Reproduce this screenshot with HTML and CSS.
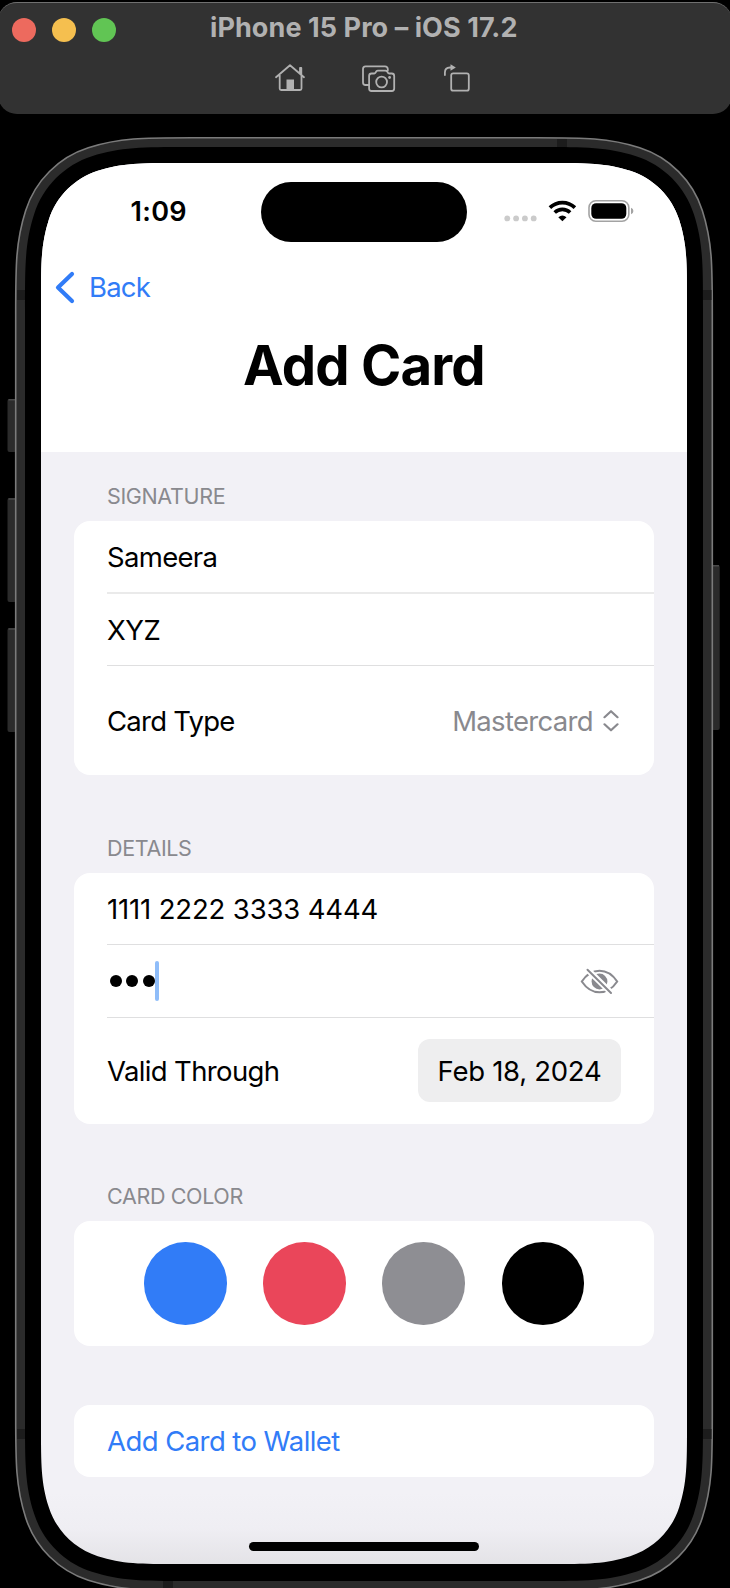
FILE: index.html
```html
<!DOCTYPE html>
<html lang="en">
<head>
<meta charset="utf-8">
<title>Simulator</title>
<link rel="stylesheet" href="styles.css">
</head>
<body>
<header class="window-bar">
  <div class="title-row">
    <div class="lights"><i class="light red"></i><i class="light yellow"></i><i class="light green"></i></div>
    <div class="window-title"><span>iPhone 15 Pro – iOS 17.2</span></div>
  </div>
  <div class="tools">
    <svg class="tool" width="34" height="30" viewBox="273 63 34 30"><path d="M276 77.200L290 65.300L304 77.200M300 73.500V68H301.300V75M279.700 75V88.500Q279.700 90 281.200 90H300Q301.500 90 301.500 88.500V75"/><path class="solid" d="M286.500 79.500h7.500v10.500h-7.500z"/></svg>
    <svg class="tool" width="36" height="30" viewBox="361 63 36 30"><path d="M368 85H365.500Q363 85 363 82.500V69Q363 66.300 365.500 66.300H385Q387.600 66.300 387.800 69V70.500M371.500 73.500H374.200Q375 73.500 375.600 72.500L376.400 71.300Q376.900 70.600 378 70.600H385.300Q386.400 70.600 387 71.300L387.800 72.500Q388.300 73.500 389.200 73.500H391.800Q394.200 73.500 394.200 76V88.500Q394.200 91 391.800 91H371.500Q369.100 91 369.100 88.500V76Q369.100 73.500 371.500 73.500Z"/><circle cx="381.600" cy="82" r="5.400"/><circle class="solid" cx="389.600" cy="77.500" r="1.400"/></svg>
    <svg class="tool" width="30" height="30" viewBox="442 62 30 30"><rect x="451.200" y="72.300" width="17.600" height="17.400" rx="2"/><path d="M444.900 74V71.500Q445 66.600 450 66.500H451.500"/><path class="solid" d="M450.500 63.200L455.800 66.500L450.500 69.800Z"/></svg>
  </div>
</header>

<main class="phone">
  <svg class="frame" width="730" height="1457" viewBox="0 137 730 1457">
    <g class="buttons">
      <rect x="7.500" y="399" width="9" height="53" rx="2"/><rect x="7.500" y="498" width="9" height="104" rx="2"/><rect x="7.500" y="628" width="9" height="104" rx="2"/><rect x="711" y="565" width="8.700" height="165" rx="2"/>
    </g>
    <path class="button-edge" d="M8.500 399.700H15M8.500 498.900H15M8.500 628.900H15M713 565.700H719"/>
    <path class="shell" d="M191.500 137.800H536.500c48 0 72.300 0 103.200 10c29.600 9.500 53.200 33 62.600 62.600c10 30.900 10 55.200 10 103.200V1414.500c0 48 0 72.300 -10 103.200c-9.500 29.600 -33 53.200 -62.600 62.600c-30.900 10 -55.200 10 -103.200 10H191.500c-48 0 -72.300 0 -103.200 -10c-29.600 -9.500 -53.200 -33 -62.600 -62.600c-10 -30.900 -10 -55.200 -10 -103.200V313.600c0 -48 0 -72.300 10 -103.200c9.500 -29.600 33 -53.200 62.600 -62.600c30.900 -10 55.200 -10 103.200 -10Z"/>
    <path class="antenna" d="M557 139h10v9h-10zM163 1581h10v8h-10zM17 290h9v10h-9zM703 290h8.500v10h-8.500zM17 1429h9v10h-9zM703 1429h8.500v10h-8.500z"/>
    <path class="bezel" d="M187 147H541c44.300 0 66.700 0 95.100 9.200c27.300 8.700 49 30.400 57.700 57.700c9.200 28.500 9.200 50.900 9.200 95.100V1419c0 44.300 0 66.700 -9.200 95.100c-8.700 27.300 -30.400 49 -57.700 57.700c-28.500 9.200 -50.900 9.200 -95.100 9.200H187c-44.300 0 -66.700 0 -95.100 -9.200c-27.300 -8.700 -49 -30.400 -57.700 -57.700c-9.200 -28.500 -9.200 -50.900 -9.200 -95.100V309c0 -44.300 0 -66.700 9.200 -95.100c8.700 -27.300 30.400 -49 57.700 -57.700c28.500 -9.200 50.900 -9.200 95.100 -9.200Z"/>
  </svg>

  <div class="screen">
    <div class="top">
      <div class="status">
        <div class="time"><span>1:09</span></div>
        <div class="island"></div>
        <svg class="status-icons" width="132" height="26" viewBox="503 197 132 26">
          <g fill="#cbcbcb"><circle cx="507.300" cy="218.400" r="2.900"/><circle cx="516.100" cy="218.400" r="2.900"/><circle cx="524.900" cy="218.400" r="2.900"/><circle cx="533.700" cy="218.400" r="2.900"/></g>
          <g fill="none" stroke="#000" stroke-width="3.700"><path d="M549.900 207.600A18 18 0 0 1 574.900 207.600"/><path d="M554.700 212.500A11.300 11.300 0 0 1 570.100 212.500"/></g>
          <path d="M558.300 217.200Q562.400 213.600 566.500 217.200L562.400 221.300Z"/>
          <rect x="589" y="200.800" width="39.800" height="20.500" rx="6.800" fill="none" stroke="#a3a3a3" stroke-width="1.600"/>
          <rect x="591.300" y="203.200" width="35" height="15.600" rx="4.800"/>
          <path d="M631 207.800Q633.400 208.700 633.400 211T631 214.200Z" fill="#a3a3a3"/>
        </svg>
      </div>
      <a class="back"><svg width="20" height="34" viewBox="0 0 20 34"><path d="M17 3L3 16.500L17 30"/></svg><span>Back</span></a>
      <h1 class="heading"><span>Add Card</span></h1>
    </div>

    <section class="group">
      <h2 class="label"><span>SIGNATURE</span></h2>
      <div class="card">
        <div class="row thick"><span class="t-name">Sameera</span></div>
        <div class="row"><span class="t-xyz">XYZ</span></div>
        <div class="row tall"><span class="t-type">Card Type</span>
          <div class="picker"><span>Mastercard</span><svg width="16" height="24" viewBox="0 0 16 24"><path d="M1.500 8.200L8 2.200L14.500 8.200M1.500 15.300L8 21.300L14.500 15.300"/></svg></div>
        </div>
      </div>
    </section>

    <section class="group">
      <h2 class="label details"><span>DETAILS</span></h2>
      <div class="card">
        <div class="row"><span class="t-number">1111 2222 3333 4444</span></div>
        <div class="row code">
          <div class="secret"><i class="dot"></i><i class="dot"></i><i class="dot"></i><i class="caret"></i></div>
          <svg class="eye" width="40" height="28" viewBox="580 967 40 28"><circle class="pupil" cx="599.500" cy="981.500" r="7.900"/><path d="M581.800 981.500C586.800 974 592.800 970.700 599.500 970.700S612.200 974 617.200 981.500C612.200 989 606.200 992.300 599.500 992.300S586.800 989 581.800 981.500Z"/><path class="gap" d="M587 969L611.800 993.400"/><path d="M587.500 969.800L611 993"/></svg>
        </div>
        <div class="row medium"><span class="t-valid">Valid Through</span><div class="date"><span>Feb 18, 2024</span></div></div>
      </div>
    </section>

    <section class="group">
      <h2 class="label color"><span>CARD COLOR</span></h2>
      <div class="card swatches"><i class="swatch blue"></i><i class="swatch pink"></i><i class="swatch gray"></i><i class="swatch black"></i></div>
    </section>

    <div class="card action"><a class="row link"><span class="t-link">Add Card to Wallet</span></a></div>
    <div class="bottom"><div class="home"></div></div>
  </div>
</main>
</body>
</html>
```

FILE: styles.css
```css
* { box-sizing: border-box; }
body {
  margin: 0;
  width: 730px;
  height: 1588px;
  overflow: hidden;
  background: #000;
  font-family: Inter, "Liberation Sans", sans-serif;
  font-size: 27.500px;
  line-height: 1.2;
}
span { white-space: nowrap; }
h1, h2 { margin: 0; }
i { display: block; }

.window-bar {
  width: 734px;
  height: 112px;
  margin: 2px 0 0 -2px;
  padding: 0 2px;
  border-top: 1px solid #707070;
  border-radius: 19px;
  background: #323232;
}
.title-row { display: flex; align-items: center; height: 50px; padding-left: 12px; }
.lights { display: flex; gap: 16px; padding-top: 4px; }
.light { width: 24px; height: 24px; border-radius: 50%; }
.red { background: #ed6a5e; }
.yellow { background: #f5bf4f; }
.green { background: #61c554; }
.window-title { padding: 1px 0 0 94px; color: #b1b1b1; font-size: 27px; font-weight: 700; letter-spacing: 0.080px; }
.tools { display: flex; padding: 10px 0 0 273px; }
.tool { fill: none; stroke: #b1b1b1; stroke-width: 1.8; stroke-linejoin: round; stroke-linecap: round; }
.tool + .tool { margin-left: 54px; }
.tool + .tool + .tool { margin-left: 45px; }
.tool .solid { fill: #b1b1b1; stroke: none; }

.phone { position: relative; padding: 49px 0 0 41px; }
.frame { position: absolute; left: 0; top: 23px; }
.buttons { fill: #2b2b2b; }
.button-edge { fill: none; stroke: #4a4a4a; stroke-width: 1.5; }
.shell { fill: #2b2b2b; stroke: #7b7b7b; stroke-width: 1.6; }
.antenna { fill: #1c1c1c; }
.bezel { fill: #000; }

.screen {
  position: relative;
  width: 646px;
  height: 1401px;
  background: linear-gradient(#f2f1f6 0, #f2f1f6 1330px, #efeef3 1365px, #e4e3e7 1401px);
  clip-path: path("M137.600 0H508.400c37.600 0 56.600 0 80.800 7.800c23.200 7.400 41.600 25.800 49 49c7.800 24.200 7.800 43.200 7.800 80.800V1263.400c0 37.600 0 56.600 -7.800 80.800c-7.400 23.200 -25.800 41.600 -49 49c-24.200 7.800 -43.200 7.800 -80.800 7.800H137.600c-37.600 0 -56.600 0 -80.800 -7.800c-23.200 -7.400 -41.600 -25.800 -49 -49c-7.800 -24.200 -7.800 -43.200 -7.800 -80.800V137.600c0 -37.600 0 -56.600 7.800 -80.800c7.400 -23.200 25.800 -41.600 49 -49c24.200 -7.800 43.200 -7.800 80.800 -7.800Z");
}
.top { height: 289px; background: #fff; }
.status { display: flex; align-items: center; height: 97px; }
.time { width: 220px; padding: 2px 0 0 89.500px; font-size: 27px; font-weight: 600; letter-spacing: 0.300px; }
.island { width: 206px; height: 60px; border-radius: 30px; background: #000; }
.status-icons { margin: 0 0 4px 36px; }
.back { display: flex; align-items: center; height: 56px; padding-left: 14px; color: #317cf7; }
.back svg { fill: none; stroke: #317cf7; stroke-width: 4.200; stroke-linecap: round; stroke-linejoin: round; }
.back span { margin-left: 14px; padding-bottom: 1px; letter-spacing: -0.800px; }
.heading { padding-top: 16px; text-align: center; font-size: 54.500px; line-height: 66px; font-weight: 700; letter-spacing: -0.800px; }

.group { padding: 0 33px; }
.label { height: 69px; padding: 30px 0 0 33px; color: #89898e; font-size: 21.500px; line-height: 28px; font-weight: 400; letter-spacing: -0.360px; }
.label.details { height: 98px; padding-top: 59px; }
.label.color { height: 97.600px; padding-top: 58px; }
.card { border-radius: 16px; background: #fff; }
.row { display: flex; align-items: center; justify-content: space-between; height: 72px; margin-left: 33px; padding-right: 33px; border-bottom: 1px solid #dfdfe0; }
.row > span, .picker { padding-top: 1px; }
.row.thick { height: 73px; border-bottom: 2px solid #eaeaea; }
.row.code { height: 73px; }
.row:last-child { border-bottom: 0; }
.row.tall { height: 109px; }
.row.medium { height: 105.700px; }
.t-name { letter-spacing: -0.680px; }
.t-xyz { letter-spacing: -0.400px; }
.t-type { letter-spacing: -0.750px; }
.t-number { letter-spacing: -0.150px; }
.t-valid { letter-spacing: -0.640px; }
.t-link { letter-spacing: -0.560px; }
.picker { display: flex; align-items: center; gap: 10px; padding-right: 2px; color: #89898e; letter-spacing: -0.680px; }
.picker svg { fill: none; stroke: #89898e; stroke-width: 2.200; stroke-linecap: round; stroke-linejoin: round; }
.secret { display: flex; align-items: center; gap: 4.500px; padding: 0 0 0 2.500px; }
.dot { width: 12px; height: 12px; border-radius: 50%; background: #000; }
.caret { width: 3.500px; height: 40px; margin-left: -4px; border-radius: 2px; background: #8fbdf9; }
.eye { fill: none; stroke: #89898e; stroke-width: 2; stroke-linecap: round; margin-right: 1px; }
.eye .pupil { fill: #89898e; stroke: none; }
.eye .gap { stroke: #fff; stroke-width: 6; stroke-linecap: butt; }
.date { display: flex; align-items: center; justify-content: center; width: 203px; height: 63px; padding-top: 1px; border-radius: 12px; background: #eeeeef; letter-spacing: -0.280px; }
.swatches { display: flex; align-items: center; height: 124.800px; padding-left: 70px; gap: 36.700px; }
.swatch { width: 82.500px; height: 82.500px; border-radius: 50%; }
.blue { background: #317cf7; }
.pink { background: #ea465a; }
.gray { background: #8e8e93; }
.black { background: #000; }
.action { margin: 58.500px 33px 0; }
.link { color: #317cf7; }
.bottom { display: flex; justify-content: center; padding-top: 65.500px; }
.home { width: 230px; height: 8.500px; border-radius: 5px; background: #000; }
```
